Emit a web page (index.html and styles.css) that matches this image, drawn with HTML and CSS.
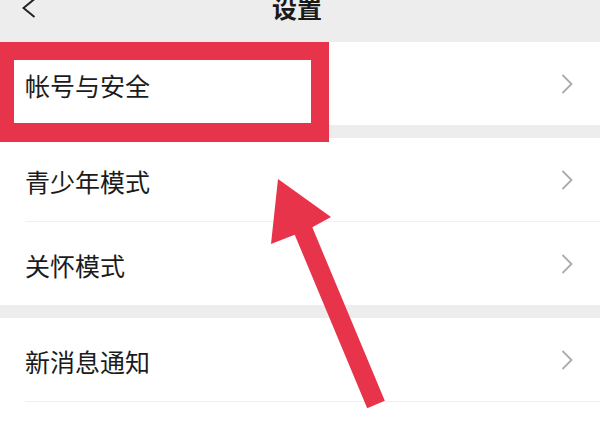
FILE: index.html
```html
<!DOCTYPE html>
<html lang="zh-CN">
<head>
<meta charset="utf-8">
<title>设置</title>
<link rel="stylesheet" href="styles.css">
</head>
<body>
<div class="screen">
  <header class="header">
    <div class="back">
      <svg width="14" height="20" viewBox="0 0 14 20"><polyline points="12.5,1 1.5,10 12.5,19" fill="none" stroke="#222" stroke-width="2"/></svg>
    </div>
    <div class="title">设置</div>
    <div class="spacer"></div>
  </header>

  <section class="group">
    <div class="row"><span class="label">帐号与安全</span><span class="chev"><svg width="12" height="20" viewBox="0 0 12 20"><polyline points="1.5,1 10.5,10 1.5,19" fill="none" stroke="#ababab" stroke-width="1.8"/></svg></span></div>
  </section>
  <div class="gap"></div>
  <section class="group">
    <div class="row"><span class="label">青少年模式</span><span class="chev"><svg width="12" height="20" viewBox="0 0 12 20"><polyline points="1.5,1 10.5,10 1.5,19" fill="none" stroke="#ababab" stroke-width="1.8"/></svg></span></div>
    <div class="divider"></div>
    <div class="row"><span class="label">关怀模式</span><span class="chev"><svg width="12" height="20" viewBox="0 0 12 20"><polyline points="1.5,1 10.5,10 1.5,19" fill="none" stroke="#ababab" stroke-width="1.8"/></svg></span></div>
  </section>
  <div class="gap"></div>
  <section class="group">
    <div class="row"><span class="label">新消息通知</span><span class="chev"><svg width="12" height="20" viewBox="0 0 12 20"><polyline points="1.5,1 10.5,10 1.5,19" fill="none" stroke="#ababab" stroke-width="1.8"/></svg></span></div>
    <div class="divider"></div>
    <div class="row"></div>
  </section>

  <div class="highlight"></div>
  <svg class="arrow" viewBox="0 0 600 427" width="600" height="427">
    <polygon points="278,179 331,217 312.3,227.3 384.8,400.8 367.2,408.2 294.7,234.7 271,244" fill="#e8344a"/>
  </svg>
</div>
</body>
</html>
```

FILE: styles.css
```css
html, body {
  margin: 0;
  padding: 0;
  background: #ffffff;
}

.screen {
  position: relative;
  width: 600px;
  height: 427px;
  overflow: hidden;
  background: #ffffff;
  font-family: "Noto Sans CJK SC", "Noto Sans", sans-serif;
  color: #1b1b1b;
}

.header {
  margin-top: -28px;
  height: 70px;
  background: #ededed;
  display: grid;
  grid-template-columns: 1fr auto 1fr;
  align-items: center;
}

.back {
  padding-left: 22px;
  display: flex;
  align-items: center;
  height: 20px;
  margin-top: 2px;
}

.title {
  font-size: 25px;
  font-weight: 600;
  color: #1a1a1a;
  line-height: 30px;
  margin-right: 6px;
}

.group {
  background: #ffffff;
}

.gap {
  height: 13px;
  background: #ededed;
}

.row {
  height: 83px;
  display: flex;
  align-items: center;
  justify-content: space-between;
  padding: 0 27px 0 25px;
}

.label {
  font-size: 25px;
  line-height: 30px;
  padding-top: 3px;
}

.chev {
  display: flex;
  align-items: center;
}

.divider {
  height: 1px;
  margin-left: 25px;
  background: #f0f0f0;
}

.highlight {
  position: absolute;
  left: -4px;
  top: 42px;
  width: 333px;
  height: 100px;
  box-sizing: border-box;
  border: 18px solid #e8344a;
  border-bottom-width: 19px;
}

.arrow {
  position: absolute;
  left: 0;
  top: 0;
}
```
